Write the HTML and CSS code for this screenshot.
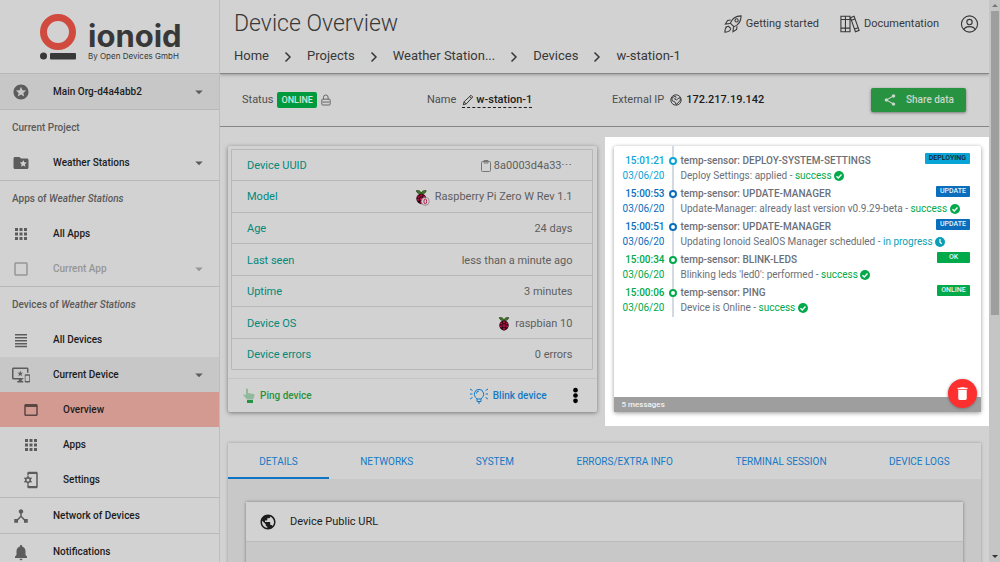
FILE: index.html
```html
<!DOCTYPE html>
<html lang="en">
<head>
<meta charset="utf-8">
<title>Device Overview</title>
<link rel="stylesheet" href="styles.css">
</head>
<body>
<svg class="defs" aria-hidden="true">
  <symbol id="apps" viewBox="0 0 24 24"><path d="M4 8h4V4H4v4zm6 12h4v-4h-4v4zm-6 0h4v-4H4v4zm0-6h4v-4H4v4zm6 0h4v-4h-4v4zm6-10v4h4V4h-4zm-6 4h4V4h-4v4zm6 6h4v-4h-4v4zm0 6h4v-4h-4v4z"/></symbol>
  <symbol id="caret" viewBox="0 0 24 24"><path d="M7 10l5 5 5-5z"/></symbol>
  <symbol id="chevron" viewBox="0 0 8 12"><path d="M1.500 1.500 6 6 1.500 10.500" fill="none" stroke="currentColor" stroke-width="1.500"/></symbol>
  <symbol id="check" viewBox="0 0 20 20"><circle cx="10" cy="10" r="10"/><path d="M5 10.500l3.500 3.500L15 7" fill="none" stroke="#fff" stroke-width="2.800"/></symbol>
  <symbol id="clock" viewBox="0 0 20 20"><circle cx="10" cy="10" r="10"/><path d="M10 4v6.500l3.500 3" fill="none" stroke="#fff" stroke-width="2.400"/></symbol>
  <symbol id="berry" viewBox="0 0 20 24">
    <path d="M10 6C7 7 2 5 2 1c4-1 7 1 8 4 1-3 4-5 8-4 0 4-5 6-8 5z" fill="#3c7d22" stroke="#1c2a14"/>
    <path d="M10 6c4 0 8 3 8 8 0 5-4 9-8 9s-8-4-8-9c0-5 4-8 8-8z" fill="#25060f"/>
    <g fill="#a80f43"><circle cx="10" cy="9" r="2"/><circle cx="5.500" cy="11" r="2"/><circle cx="14.500" cy="11" r="2"/><circle cx="10" cy="14.500" r="2.600"/><circle cx="5" cy="16" r="2"/><circle cx="15" cy="16" r="2"/><circle cx="10" cy="20" r="2"/></g>
  </symbol>
</svg>
<div class="app">
  <aside class="sidebar">
    <div class="logo">
      <svg class="logo-mark" viewBox="0 0 36 46" aria-hidden="true"><circle cx="18" cy="18" r="14.500" fill="none" stroke="#d04a3f" stroke-width="7"/><circle cx="3.500" cy="42" r="3.500" fill="#383838"/><rect x="10" y="39" width="26" height="6.500" rx="1" fill="#383838"/></svg>
      <div class="logo-text"><span class="brand">ionoid</span><span class="tagline">By Open Devices GmbH</span></div>
    </div>
    <nav>
      <a class="item shaded ruled-top" href="#"><svg class="ic" viewBox="0 0 24 24"><path d="M11.990 2C6.470 2 2 6.480 2 12s4.470 10 9.990 10C17.520 22 22 17.520 22 12S17.520 2 11.990 2zm4.240 16L12 15.450 7.770 18l1.120-4.810-3.730-3.230 4.920-.42L12 5l1.920 4.530 4.920.42-3.730 3.230L16.230 18z"/></svg><span>Main Org-d4a4abb2</span><svg class="caret"><use href="#caret"/></svg></a>
      <h2 class="group ruled-top">Current Project</h2>
      <a class="item" href="#"><svg class="ic" viewBox="0 0 24 24"><path d="M20 6h-8l-2-2H4c-1.100 0-2 .9-2 2v12c0 1.100.9 2 2 2h16c1.100 0 2-.9 2-2V8c0-1.100-.9-2-2-2zm-2.060 11L15 15.280 12.060 17l.78-3.330-2.590-2.240 3.410-.29L15 8l1.340 3.140 3.410.29-2.590 2.240.78 3.330z"/></svg><span>Weather Stations</span><svg class="caret"><use href="#caret"/></svg></a>
      <h2 class="group ruled-top">Apps of <em>Weather Stations</em></h2>
      <a class="item" href="#"><svg class="ic"><use href="#apps"/></svg><span>All Apps</span></a>
      <a class="item disabled" href="#"><svg class="ic" viewBox="0 0 24 24"><path d="M19 3H5c-1.100 0-2 .9-2 2v14c0 1.100.9 2 2 2h14c1.100 0 2-.9 2-2V5c0-1.100-.9-2-2-2zm0 16H5V5h14v14z"/></svg><span>Current App</span><svg class="caret"><use href="#caret"/></svg></a>
      <h2 class="group ruled-top">Devices of <em>Weather Stations</em></h2>
      <a class="item" href="#"><svg class="ic" viewBox="0 0 24 24"><path d="M4 4h16v2H4zM4 8h16v2H4zM4 12h16v2H4zM4 16h16v2H4zM4 19.500h16v2H4z"/></svg><span>All Devices</span></a>
      <a class="item shaded" href="#"><svg class="ic" viewBox="0 0 24 24"><path d="M23 11.010L18 11c-.55 0-1 .45-1 1v9c0 .55.45 1 1 1h5c.55 0 1-.45 1-1v-9c0-.55-.45-.99-1-.99zM23 20h-5v-7h5v7zM20 2H2C.89 2 0 2.890 0 4v12c0 1.100.89 2 2 2h7v2H7v2h8v-2h-2v-2h2v-2H2V4h18v5h2V4c0-1.110-.9-2-2-2zm-8.030 7L11 6l-.97 3H7l2.470 1.760-.94 2.910 2.470-1.800 2.470 1.800-.94-2.910L15 9h-3.030z"/></svg><span>Current Device</span><svg class="caret"><use href="#caret"/></svg></a>
      <a class="item sub active" href="#"><svg class="ic" viewBox="0 0 24 24"><path d="M19 4H5c-1.110 0-2 .9-2 2v12c0 1.100.89 2 2 2h14c1.100 0 2-.9 2-2V6c0-1.100-.89-2-2-2zm0 14H5V8h14v10z"/></svg><span>Overview</span></a>
      <a class="item sub" href="#"><svg class="ic"><use href="#apps"/></svg><span>Apps</span></a>
      <a class="item sub" href="#"><svg class="ic" viewBox="0 0 24 24"><path d="M19 1H9c-1.100 0-2 .9-2 2v3h2V4h10v16H9v-2H7v3c0 1.100.9 2 2 2h10c1.100 0 2-.9 2-2V3c0-1.100-.9-2-2-2z"/><circle cx="8" cy="12" r="3" fill="none" stroke="currentColor" stroke-width="2"/><path d="M8 6.500v3M8 14.500v3M3.200 9.200l2.500 1.500M10.300 13.300l2.500 1.500M3.200 14.800l2.500-1.500M10.300 10.700l2.500-1.500" stroke="currentColor" stroke-width="2"/></svg><span>Settings</span></a>
      <a class="item ruled-top" href="#"><svg class="ic" viewBox="0 0 24 24"><path d="M17 16l-4-4V8.820C14.160 8.400 15 7.300 15 6c0-1.660-1.340-3-3-3S9 4.340 9 6c0 1.300.84 2.400 2 2.820V12l-4 4H3v5h5v-3.050l4-4.200 4 4.200V21h5v-5h-4z"/></svg><span>Network of Devices</span></a>
      <a class="item ruled-top" href="#"><svg class="ic" viewBox="0 0 24 24"><path d="M12 23c1.100 0 2-.9 2-2h-4c0 1.100.89 2 2 2zm6-7v-5c0-3.070-1.640-5.640-4.500-6.320V4c0-.83-.67-1.500-1.500-1.500s-1.500.67-1.500 1.500v.68C7.630 5.360 6 7.920 6 11v5l-2 2v2h16v-2l-2-2z"/></svg><span>Notifications</span></a>
    </nav>
  </aside>

  <main class="main">
    <header class="top">
      <div class="top-row">
        <h1>Device Overview</h1>
        <div class="top-links">
          <a href="#"><svg class="outline rocket" viewBox="0 0 20 20"><path d="M7 9c2-5 6-8 12-8 0 6-3 10-8 12zM7.500 5.500 4 6 1.500 10 6.500 9.500M14.500 12.500 14 16 10 18.500 10.500 13.500M5 12.500c-3 .5-4 3-4 6.500 3.500 0 6-1 6.500-4M1.500 13.500 5 12.500 7.500 15"/><circle cx="14" cy="6" r="1.800"/></svg>Getting started</a>
          <a href="#"><svg class="outline books" viewBox="0 0 22 20"><path d="M1 1.500h10v17H1zM6 1.500v17M1 5h10M1 14.500h10M11.500 3l4-1.500L21 17l-4 1.500zM12.500 6l4-1.500M16 15.500l4-1.500"/></svg>Documentation</a>
          <a href="#" aria-label="Account"><svg class="outline user" viewBox="0 0 20 20"><circle cx="10" cy="10" r="8.500"/><circle cx="10" cy="8" r="2.800"/><path d="M4 16c1-2.500 3-3.300 6-3.300s5 .8 6 3.300"/></svg></a>
        </div>
      </div>
      <nav class="crumbs" aria-label="Breadcrumb">
        <a href="#">Home</a><svg><use href="#chevron"/></svg><a href="#">Projects</a><svg><use href="#chevron"/></svg><a href="#">Weather Station...</a><svg><use href="#chevron"/></svg><a href="#">Devices</a><svg><use href="#chevron"/></svg><a href="#">w-station-1</a>
      </nav>
    </header>

    <section class="status">
      <div class="fact"><span class="label">Status</span><span class="pill">ONLINE</span><svg class="outline lock" viewBox="0 0 12 14"><rect x="1" y="6" width="10" height="7" rx="1"/><path d="M3 6V4a2.700 2.700 0 0 1 5.500-.5V6M2 9.500h8"/></svg></div>
      <div class="fact"><span class="label">Name</span><a class="edit" href="#"><svg class="outline" viewBox="0 0 14 14"><path d="M1.500 12.500l1-3.500 8-7.500 2 2-7.500 8zM9 3l2 2M2.500 9l2 2.500"/></svg>w-station-1</a></div>
      <div class="fact"><span class="label">External IP</span><svg class="outline globe" viewBox="0 0 12 12"><circle cx="6" cy="6" r="5.200"/><path d="M2 4l3-2 1 1.500L4.500 5l2 1 3-2.500 1 2.500-2.500 3L6 10.500 5 8 2 6.500z"/></svg><strong>172.217.19.142</strong></div>
      <button class="share" type="button"><svg viewBox="0 0 24 24"><path d="M18 16.080c-.76 0-1.440.3-1.960.77L8.910 12.700c.05-.23.09-.46.09-.7s-.04-.47-.09-.7l7.050-4.110c.54.5 1.250.81 2.040.81 1.660 0 3-1.340 3-3s-1.340-3-3-3-3 1.340-3 3c0 .24.04.47.09.7L8.040 9.810C7.500 9.310 6.790 9 6 9c-1.660 0-3 1.340-3 3s1.340 3 3 3c.79 0 1.500-.31 2.040-.81l7.120 4.160c-.05.21-.08.43-.08.65 0 1.610 1.310 2.920 2.920 2.920s2.920-1.310 2.920-2.920-1.310-2.920-2.920-2.920z"/></svg>Share data</button>
    </section>

    <div class="columns">
      <section class="col">
        <div class="card device">
          <div class="table-wrap">
          <table class="info">
            <tr><th scope="row">Device UUID</th><td><svg class="outline clip" viewBox="0 0 10 12"><rect x=".5" y="1.500" width="9" height="10" rx="1"/><path d="M3 .500h4v2.500H3z"/></svg> 8a0003d4a33⋯</td></tr>
            <tr><th scope="row">Model</th><td><svg class="berry zero" viewBox="0 0 24 26"><use href="#berry" width="20" height="24"/><circle cx="16.500" cy="18.500" r="6.500" fill="#d2d2d2" stroke="#8b6670"/><ellipse cx="16.500" cy="18.500" rx="2.200" ry="4" fill="none" stroke="#b01a48" stroke-width="1.600"/></svg> Raspberry Pi Zero W Rev 1.1</td></tr>
            <tr><th scope="row">Age</th><td>24 days</td></tr>
            <tr><th scope="row">Last seen</th><td>less than a minute ago</td></tr>
            <tr><th scope="row">Uptime</th><td>3 minutes</td></tr>
            <tr><th scope="row">Device OS</th><td><svg class="berry"><use href="#berry"/></svg> raspbian 10</td></tr>
            <tr><th scope="row">Device errors</th><td>0 errors</td></tr>
          </table>
          </div>
          <div class="actions">
            <button class="ping" type="button"><svg viewBox="0 0 12 15"><path d="M3 1.500c0-1.500 2-1.500 2 0V5l5.500 1c1 .3 1 1 1 2L10 11.500H4L.5 7.500C0 6.500 1 6 3 7z" fill="#8fba9b"/><path d="M4 12h6v3H4z" fill="#279341"/></svg>Ping device</button>
            <button class="blink" type="button"><svg class="outline" viewBox="0 0 18 16"><path d="M7 11C5 9 4 7.500 4.500 5a4.600 4.600 0 0 1 9 0c.5 2.500-.5 4-2.500 6zM7 11v2.500h4V11M8 15h2M6.500 5.500a2.500 2.500 0 0 1 2.500-2.500M0 1l2.500 1.500M0 6h2.500M0 11l2.500-1.500M18 1l-2.500 1.500M18 6h-2.500M18 11l-2.500-1.500"/></svg>Blink device</button>
            <button class="more" type="button" aria-label="More actions"><svg viewBox="0 0 6 16"><circle cx="3" cy="3" r="2.200"/><circle cx="3" cy="8" r="2.200"/><circle cx="3" cy="13" r="2.200"/></svg></button>
          </div>
        </div>
      </section>

      <section class="col spotlight">
        <div class="card messages">
          <ol class="timeline">
            <li class="cyan"><div class="when"><b>15:01:21</b><span>03/06/20</span></div><i class="dot"></i><div class="what"><b>temp-sensor: DEPLOY-SYSTEM-SETTINGS</b><span>Deploy Settings: applied - <span class="ok">success <svg><use href="#check"/></svg></span></span></div><span class="badge dark">DEPLOYING</span></li>
            <li class="blue"><div class="when"><b>15:00:53</b><span>03/06/20</span></div><i class="dot"></i><div class="what"><b>temp-sensor: UPDATE-MANAGER</b><span>Update-Manager: already last version v0.9.29-beta - <span class="ok">success <svg><use href="#check"/></svg></span></span></div><span class="badge">UPDATE</span></li>
            <li class="blue"><div class="when"><b>15:00:51</b><span>03/06/20</span></div><i class="dot"></i><div class="what"><b>temp-sensor: UPDATE-MANAGER</b><span>Updating Ionoid SealOS Manager scheduled - <span class="progress">in progress <svg><use href="#clock"/></svg></span></span></div><span class="badge">UPDATE</span></li>
            <li class="green"><div class="when"><b>15:00:34</b><span>03/06/20</span></div><i class="dot"></i><div class="what"><b>temp-sensor: BLINK-LEDS</b><span>Blinking leds 'led0': performed - <span class="ok">success <svg><use href="#check"/></svg></span></span></div><span class="badge">OK</span></li>
            <li class="green"><div class="when"><b>15:00:06</b><span>03/06/20</span></div><i class="dot"></i><div class="what"><b>temp-sensor: PING</b><span>Device is Online - <span class="ok">success <svg><use href="#check"/></svg></span></span></div><span class="badge">ONLINE</span></li>
          </ol>
          <footer class="count">5 messages</footer>
          <button class="trash" type="button" aria-label="Delete messages"><svg viewBox="0 0 24 24"><path d="M6 19c0 1.100.9 2 2 2h8c1.100 0 2-.9 2-2V7H6v12zM19 4h-3.500l-1-1h-5l-1 1H5v2h14V4z"/></svg></button>
        </div>
      </section>
    </div>

    <section class="tabs-card">
      <div class="tabs" role="tablist">
        <button type="button" role="tab" aria-selected="true" class="on">DETAILS</button><button type="button" role="tab">NETWORKS</button><button type="button" role="tab">SYSTEM</button><button type="button" role="tab">ERRORS/EXTRA INFO</button><button type="button" role="tab">TERMINAL SESSION</button><button type="button" role="tab">DEVICE LOGS</button>
      </div>
      <div class="panel">
        <div class="url-card">
          <h3><svg viewBox="0 0 24 24"><path d="M12 2C6.480 2 2 6.480 2 12s4.480 10 10 10 10-4.480 10-10S17.520 2 12 2zm-1 17.930c-3.950-.49-7-3.850-7-7.930 0-.62.08-1.210.21-1.790L9 15v1c0 1.100.9 2 2 2v1.930zm6.900-2.540c-.26-.81-1-1.390-1.900-1.390h-1v-3c0-.55-.45-1-1-1H8v-2h2c.55 0 1-.45 1-1V7h2c1.100 0 2-.9 2-2v-.41c2.930 1.190 5 4.060 5 7.410 0 2.080-.8 3.970-2.100 5.390z"/></svg>Device Public URL</h3>
        </div>
      </div>
    </section>
  </main>

  <div class="scrollbar" aria-hidden="true"><i class="up"></i><i class="thumb"></i><i class="down"></i></div>
</div>
</body>
</html>
```
FILE: styles.css
```css
* { box-sizing: border-box; }
body { margin: 0; background: #d2d2d2; color: #1c1c1c; font: 11px/16px Roboto, "Liberation Sans", sans-serif; }
a { color: inherit; text-decoration: none; }
button { border: 0; background: none; padding: 0; font: inherit; color: inherit; cursor: pointer; }
svg { fill: currentColor; flex: none; }
.outline { fill: none; stroke: currentColor; stroke-width: 1.2; }
h1, h2, h3 { margin: 0; font-weight: 400; }
.defs { display: none; }
.app { display: flex; height: 100vh; overflow: hidden; }

/* Sidebar */
.sidebar { flex: none; width: 220px; overflow: hidden; border-right: 1px solid #bdbdbd; }
.logo { display: flex; gap: 12px; height: 73px; padding: 14px 0 0 40px; }
.logo-mark { width: 36px; height: 46px; }
.logo-text { display: flex; flex-direction: column; color: #383838; font-family: Inter, sans-serif; padding-top: 7px; }
.brand { font-size: 31px; line-height: 30px; font-weight: 700; }
.tagline { font-size: 8px; line-height: 10px; }
.item { display: flex; align-items: center; box-sizing: content-box; min-height: 35px; padding: 0 11px 0 12px; font-weight: 500; font-size: 10px; }
.ic { width: 18px; height: 18px; margin-right: 23px; color: #5c5c5c; }
.caret { width: 18px; height: 18px; margin-left: auto; color: #5c5c5c; }
.ruled-top { border-top: 1px solid #b8b8b8; }
.shaded { background: #c7c7c7; }
.group { padding: 0 12px; font-size: 10px; line-height: 35px; font-weight: 500; color: #5a5a5a; }
.disabled, .disabled svg { color: #969696; }
.sub { padding-left: 22px; }
.active { background: #d39a92; }
.active .ic { color: #5c4643; }

/* Header */
.main { flex: 1; min-width: 0; overflow: hidden; display: flex; flex-direction: column; }
.main > * { flex: none; }
.top { padding: 8px 10px 7px 14px; border-bottom: 1px solid #858585; box-shadow: 0 1px 3px #9a9a9a; color: #383838; }
.top-row { display: flex; justify-content: space-between; align-items: center; }
h1 { font-size: 23px; line-height: 32px; font-weight: 300; }
.top-links { display: flex; align-items: center; gap: 21px; }
.top-links a { display: flex; align-items: center; gap: 4px; }
.rocket { width: 18px; height: 20px; }
.books { width: 20px; height: 20px; }
.user { width: 19px; height: 20px; }
.crumbs { display: flex; align-items: center; padding-top: 6px; font-size: 13px; line-height: 20px; }
.crumbs svg { width: 8px; height: 12px; margin: 2px 15px 0; }

.status { display: grid; grid-template-columns: 185px 185px 1fr auto; align-items: center; height: 53px; padding: 0 23px 0 22px; border-bottom: 1px solid #858585; }
.fact { display: flex; align-items: center; gap: 4px; }
.label { color: #4d4d4d; }
.pill { padding: 0 4px; background: #009a3e; color: #d2e6d6; border-radius: 2px; font-size: 9px; font-weight: 500; }
.lock { width: 10px; height: 12px; color: #666; }
.edit { display: flex; align-items: center; gap: 2px; border-bottom: 1px dashed #1c1c1c; font-weight: 500; line-height: 14px; }
.label + .edit { margin-left: 2px; }
.edit svg, .globe { width: 12px; height: 12px; }
.edit svg { stroke-width: 1; }
.globe { margin-left: 2px; stroke-width: 0.8; }
.fact strong { font-weight: 500; }
.share { display: flex; align-items: center; gap: 9px; height: 24px; padding: 0 12px; background: #279341; color: #c9d6cb; border-radius: 2px; box-shadow: 0 1px 3px #777; font-size: 10px; font-weight: 500; }
.share svg { width: 14px; height: 14px; }

/* Cards */
.columns { display: grid; grid-template-columns: minmax(0, 1fr) minmax(0, 1fr); margin-top: 10px; }
.col { padding: 9px 8px 14px; }
.card { display: flex; flex-direction: column; height: 266px; border-radius: 2px; }
.device { box-shadow: 0 1px 4px #777; }
.table-wrap { margin: 3px 4px 8px 3px; border: 1px solid #b8b8b8; border-radius: 1px; }
.info { width: 100%; height: 219px; border-collapse: collapse; font-size: 11px; }
.info th, .info td { padding: 2px 15px 0; }
.info tr + tr { border-top: 1px solid #b8b8b8; }
.info th { text-align: left; font-weight: 400; color: #00897b; }
.info td { text-align: right; padding-right: 19px; color: #5e5e5e; }
.info svg { vertical-align: middle; }
.clip { width: 10px; height: 12px; color: #777; stroke-width: 1; }
.berry { width: 12px; height: 14px; margin-right: 2px; }
.zero { width: 15px; height: 16px; }
.actions { flex: 1; display: flex; align-items: center; padding: 0 18px 0 15px; border-top: 1px solid #c5c5c5; font-size: 10px; font-weight: 500; }
.actions button { display: flex; align-items: center; gap: 5px; }
.ping { color: #279341; margin-right: auto; }
.ping svg { width: 12px; height: 15px; }
.blink { color: #1579c5; margin-right: 25px; }
.blink svg { width: 18px; height: 16px; stroke-width: 1; }
.more { color: #000; }
.more svg { width: 7px; height: 17px; }

.spotlight { background: #fff; padding-left: 9px; }
.messages { position: relative; background: #fff; box-shadow: 0 1px 4px #999; justify-content: space-between; }
.timeline { list-style: none; margin: 0; padding: 6px 11px 0 9px; background: linear-gradient(#d3d9e1, #d3d9e1) 58px 0 / 2px 100% no-repeat; font-size: 10px; line-height: 15px; color: #6b7078; }
.timeline li { display: flex; align-items: flex-start; height: 33px; padding-top: 1px; }
.timeline b { font-weight: 500; }
.when { flex: none; display: flex; flex-direction: column; align-items: flex-end; width: 42px; color: var(--tone); }
.dot { flex: none; width: 8px; height: 8px; margin: 4px 4px 0; border: 2px solid var(--tone); border-radius: 50%; background: #fff; }
.what { display: flex; flex-direction: column; flex: 1; min-width: 0; white-space: nowrap; }
.what svg { width: 10px; height: 10px; vertical-align: -2px; }
.ok { color: #00a94a; }
.progress { color: #0a9fb5; }
.cyan { --tone: #0aa5d8; }
.blue { --tone: #0a6ebd; }
.green { --tone: #00a94a; }
.badge { flex: none; min-width: 33px; padding: 0 4px; text-align: center; background: var(--tone); color: #e6f3f8; border-radius: 1px; font-size: 7px; line-height: 11px; font-weight: 500; }
.dark { color: #10242c; }
.count { padding: 0 8px; background: #9e9e9e; color: #f2f2f2; font-size: 8px; line-height: 15px; font-weight: 500; }
.trash { position: absolute; right: 4px; bottom: 4px; display: grid; place-items: center; width: 29px; height: 29px; border-radius: 50%; background: #fd2f2f; color: #fff; box-shadow: 0 1px 3px #777; }
.trash svg { width: 17px; height: 17px; }

/* Tabs */
.tabs-card { margin: 17px 8px 0; background: #c8c8c8; box-shadow: 0 0 3px #999; }
.tabs { display: flex; background: #d2d2d2; }
.tabs button { flex: 1 1 auto; height: 36px; padding-top: 3px; border-bottom: 2px solid transparent; color: #1579c5; font-size: 10px; }
.tabs .on { border-color: #0d74c4; }
.panel { padding: 23px 18px 0; }
.url-card { height: 120px; box-shadow: 0 0 3px #777; }
.url-card h3 { display: flex; align-items: center; gap: 13px; height: 40px; padding: 0 13px; background: #d2d2d2; border-bottom: 1px solid #bbb; font-size: 11px; }
.url-card svg { width: 18px; height: 18px; }

/* Scrollbar */
.scrollbar { flex: none; width: 11px; display: flex; flex-direction: column; align-items: center; background: #c5c5c5; }
.up, .down { border: 3px solid transparent; }
.up { border-bottom-color: #777; border-top: 0; margin: 4px 0; }
.down { border-top-color: #333; border-bottom: 0; margin: auto 0 4px; }
.thumb { width: 8px; height: 304px; background: #9e9e9e; }
```
